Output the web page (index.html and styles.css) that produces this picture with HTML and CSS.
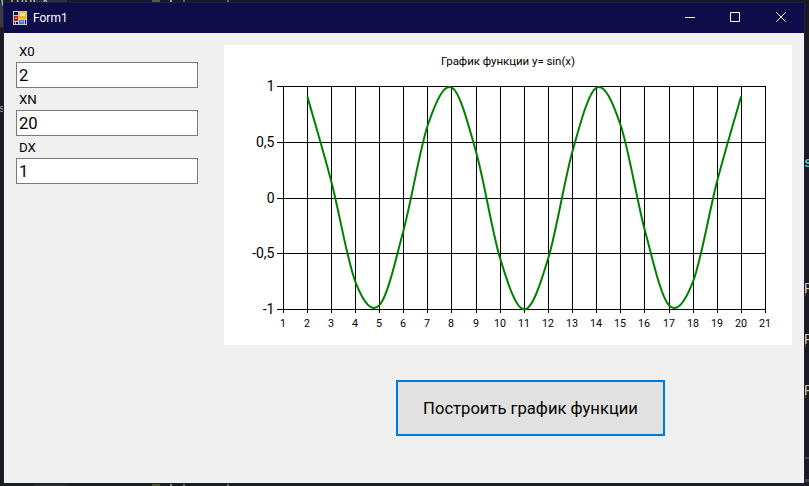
FILE: index.html
```html
<!DOCTYPE html>
<html lang="ru">
<head>
<meta charset="utf-8">
<title>Form1</title>
<link rel="stylesheet" href="styles.css">
</head>
<body>
<div class="desktop">
  <svg class="backdrop" width="809" height="486" aria-hidden="true">
    <g class="scraps">
      <rect x="0" y="3" width="3" height="24" fill="#3c3c40"/>
      <rect x="34" y="0" width="8" height="2" fill="#2d2d30"/>
      <rect x="42" y="0" width="25" height="2" fill="#333337"/>
      <rect x="152" y="0" width="8" height="2" fill="#4b6b2c"/>
      <rect x="170" y="0" width="2" height="2" fill="#999"/>
      <rect x="183" y="0" width="2" height="2" fill="#666"/>
      <rect x="227" y="0" width="2" height="2" fill="#666"/>
      <rect x="34" y="484" width="34" height="2" fill="#2a2a2a"/>
      <rect x="152" y="484" width="8" height="2" fill="#3f5c24"/>
      <rect x="170" y="484" width="2" height="2" fill="#888"/>
      <rect x="183" y="484" width="2" height="2" fill="#666"/>
      <rect x="227" y="484" width="2" height="2" fill="#666"/>
      <rect x="805" y="457" width="4" height="2" fill="#444"/>
      <rect x="805" y="479" width="4" height="3" fill="#444"/>
      <path d="M805.500 285v11M805.500 336v11M805.500 387v11" stroke="#8a3d14"/>
    </g>
    <text class="code code-light" x="-1" y="4">(index</text>
    <text class="code code-small" x="-1" y="112">s</text>
    <text class="code code-teal" x="804" y="167">s</text>
    <text class="code code-cream" x="804" y="293">P</text>
    <text class="code code-cream" x="804" y="344">P</text>
    <text class="code code-cream" x="804" y="395">P</text>
  </svg>
  <main class="window">
    <header class="titlebar">
      <svg class="app-icon" width="14" height="14" viewBox="0 0 14 14">
        <rect width="14" height="14" fill="#c9c9c9"/>
        <rect x="1" y="1" width="4" height="3" fill="#0e0c49"/>
        <rect x="1" y="5" width="4" height="5" fill="#b51a1a"/>
        <rect x="2" y="6" width="2" height="2" fill="#e8685c"/>
        <rect x="1" y="11" width="1" height="2" fill="#0e0c49"/>
        <rect x="3" y="11" width="2" height="2" fill="#0e0c49"/>
        <rect x="6" y="1" width="7" height="7" fill="#f6b51d"/>
        <rect x="7" y="2" width="5" height="3" fill="#ffe386"/>
        <rect x="6" y="9" width="5" height="4" fill="#3c7be0"/>
        <rect x="7" y="10" width="3" height="1" fill="#8fb9fa"/>
        <rect x="12" y="9" width="1" height="4" fill="#0e0c49"/>
      </svg>
      <span class="caption">Form1</span>
      <svg class="controls" width="138" height="30" viewBox="0 0 138 30" fill="none" stroke="#fff">
        <path d="M19 14.500h10"/>
        <path d="M64.500 9.500h9v9h-9z"/>
        <path d="M110.300 9.300l9.400 9.400M119.700 9.300l-9.400 9.400"/>
      </svg>
    </header>
    <div class="client">
      <form class="fields">
        <label for="x0">X0</label><input id="x0" value="2">
        <label for="xn">XN</label><input id="xn" value="20">
        <label for="dx">DX</label><input id="dx" value="1">
      </form>
      <section class="output">
        <svg class="chart" id="chart" width="568" height="300" viewBox="224 45 568 300">
          <text class="chart-title" x="441" y="65" textLength="134">График функции y= sin(x)</text>
        </svg>
        <button class="plot" type="button">Построить график функции</button>
      </section>
    </div>
  </main>
</div>
<script src="chart.js"></script>
</body>
</html>
```
FILE: styles.css
```css
* { box-sizing: border-box; }
body { margin: 0; font-family: Roboto, "Liberation Sans", sans-serif; overflow: hidden; }
.desktop { position: relative; width: 809px; height: 486px; padding: 2px 4px 2px 3px; background: #1b1b1c; }
.backdrop { position: absolute; left: 0; top: 0; }
.code { font: 14px "Liberation Mono", monospace; }
.code-light { fill: #c8c8c8; }
.code-small { fill: #a0a0a0; font-size: 10px; }
.code-teal { fill: #4ec9b0; font-weight: bold; }
.code-cream { fill: #c8c89a; }
.window { position: relative; width: 802px; height: 482px; border: 1px solid #1d1a5c; background: #f0f0f0; }
.titlebar { display: flex; align-items: center; height: 30px; padding-left: 9px; background: #0e0c49; color: #fff; }
.app-icon { display: block; }
.caption { margin-left: 6px; font-size: 12px; line-height: 30px; }
.controls { display: block; margin-left: auto; }
.client { display: flex; padding: 12px 12px 0; gap: 26px; }
.fields { display: flex; flex-direction: column; width: 182px; margin-top: -2px; }
.fields label { height: 19px; padding-left: 3px; font-size: 13.3px; line-height: 17px; }
.fields input { width: 182px; height: 26px; margin-bottom: 3px; padding: 0 2px; border: 1px solid #7a7a7a; border-radius: 0; background: #fff; color: #000; font: 16.6px Roboto, sans-serif; outline: 0; }
.output { width: 568px; }
.chart { display: block; background: #fff; }
.chart text { fill: #000; }
.chart-title { font-size: 11.5px; }
.grid { stroke: #000; stroke-width: 1; fill: none; shape-rendering: crispEdges; }
.curve { stroke: #008000; stroke-width: 2; fill: none; }
.y-label { font-size: 14px; text-anchor: end; }
.x-label { font-size: 10.7px; text-anchor: middle; }
.plot { display: block; width: 269px; height: 56px; margin: 35px 0 0 172px; padding: 0; border: 2px solid #0078d7; border-radius: 0; background: #e1e1e1; color: #000; font: 16.6px Roboto, sans-serif; }
```
FILE: chart.js
```js
const chart = document.getElementById('chart');
function add(tag, attrs, text) {
  const el = document.createElementNS('http://www.w3.org/2000/svg', tag);
  for (const k in attrs) el.setAttribute(k, attrs[k]);
  if (text !== undefined) el.textContent = text;
  chart.appendChild(el);
}
const left = 283, step = 24.1;
const rows = [[86, '1'], [142, '0,5'], [198, '0'], [253, '-0,5'], [309, '-1']];
const cols = [283, 307, 331, 355, 379, 403, 427, 451, 476, 500, 524, 548, 572, 596, 620, 644, 669, 693, 717, 741, 765];
let grid = '';
for (const [y, label] of rows) {
  grid += `M277 ${y + .5}H766`;
  add('text', { class: 'y-label', x: 274.5, y: y + 4.5 }, label);
}
cols.forEach((x, i) => {
  grid += `M${x + .5} 86V313`;
  add('text', { class: 'x-label', x: x, y: 327 }, i + 1);
});
add('path', { class: 'grid', d: grid });

// Cardinal spline through the samples
const pts = [];
for (let n = 2; n <= 20; n++) pts.push([left + .3 + (n - 1) * step, 198 - Math.sin(n) * 111.5]);
const t = 1 / 6;
const at = i => pts[Math.max(0, Math.min(pts.length - 1, i))];
let d = `M${pts[0]}`;
for (let i = 0; i < pts.length - 1; i++) {
  const a = at(i - 1), b = at(i), c = at(i + 1), e = at(i + 2);
  d += `C${b[0] + t * (c[0] - a[0])} ${b[1] + t * (c[1] - a[1])} ${c[0] - t * (e[0] - b[0])} ${c[1] - t * (e[1] - b[1])} ${c}`;
}
add('path', { class: 'curve', d });
```
